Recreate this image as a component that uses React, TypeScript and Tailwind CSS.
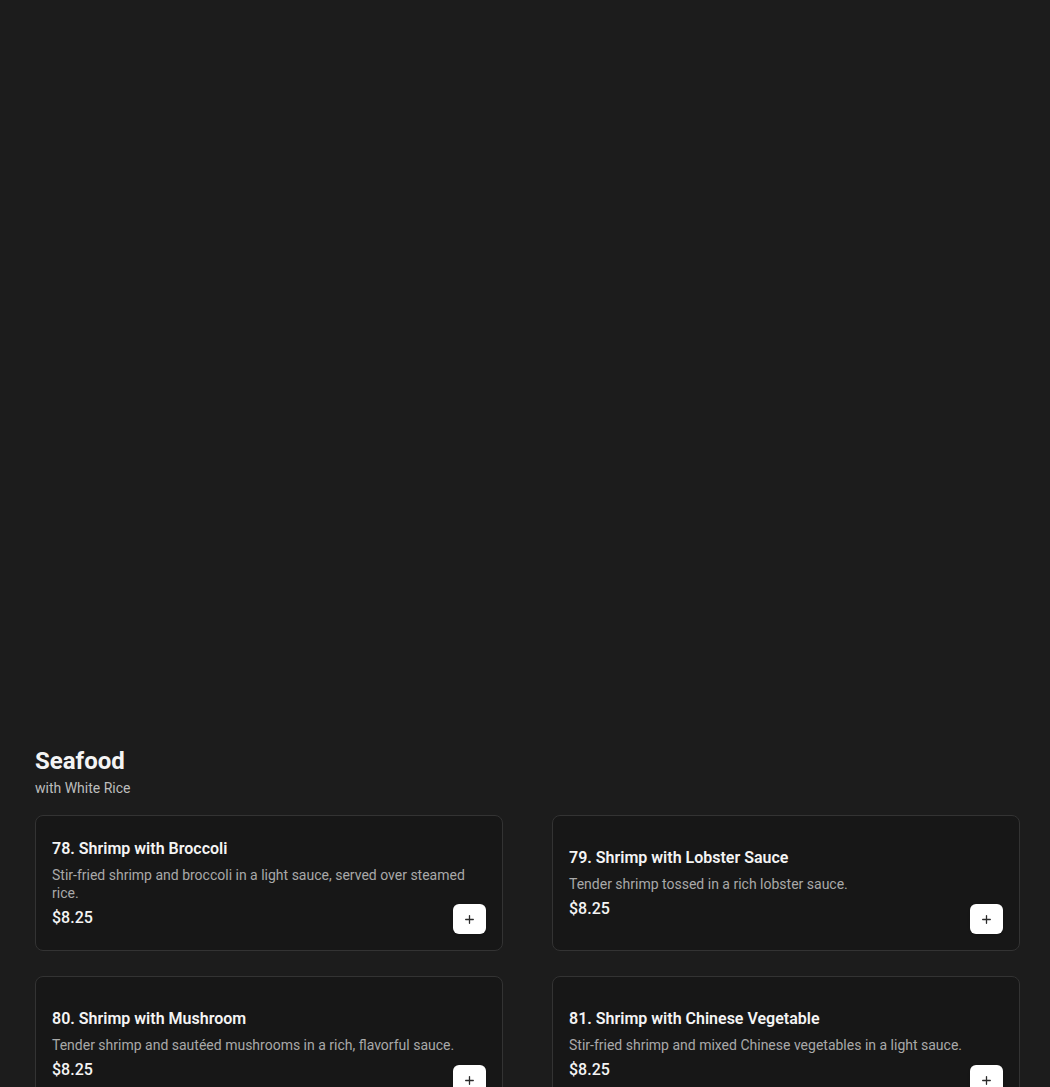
import React from 'react';
import { Plus } from 'lucide-react';

type Item = {
  id: number;
  name: string;
  description: string;
  price: string;
};

const items: Item[] = [
  {
    id: 78,
    name: 'Shrimp with Broccoli',
    description: 'Stir-fried shrimp and broccoli in a light sauce, served over steamed rice.',
    price: '$8.25',
  },
  {
    id: 79,
    name: 'Shrimp with Lobster Sauce',
    description: 'Tender shrimp tossed in a rich lobster sauce.',
    price: '$8.25',
  },
  {
    id: 80,
    name: 'Shrimp with Mushroom',
    description: 'Tender shrimp and sautéed mushrooms in a rich, flavorful sauce.',
    price: '$8.25',
  },
  {
    id: 81,
    name: 'Shrimp with Chinese Vegetable',
    description: 'Stir-fried shrimp and mixed Chinese vegetables in a light sauce.',
    price: '$8.25',
  },
];

const MenuCard: React.FC<{ item: Item }> = ({ item }) => (
  <div className="relative flex h-[136px] flex-col justify-center rounded-lg border border-[#333333] bg-[#171717] p-4">
    <h3 className="text-base font-semibold leading-[26px] text-[#f4f4f4]">
      {item.id}. {item.name}
    </h3>
    <p className="mt-[5px] text-sm leading-[17.5px] text-[#a9a9a9]">{item.description}</p>
    <p className="mt-1 text-base font-medium leading-6 text-[#f4f4f4]">{item.price}</p>
    {/* add button sits over the bottom-right corner */}
    <button className="absolute bottom-4 right-4 flex h-[30px] w-[33px] items-center justify-center rounded-md bg-white text-[#2b2b2b] shadow-sm">
      <Plus size={13} strokeWidth={2.4} />
    </button>
  </div>
);

const App: React.FC = () => {
  return (
    <div
      className="min-h-screen bg-[#1c1c1c]"
      style={{ fontFamily: 'Roboto, "Noto Sans", sans-serif' }}
    >
      <div className="h-[745px]" />
      <section className="pl-[35px] pr-[30px]">
        <h2 className="text-2xl font-bold leading-8 text-[#f4f4f4]">Seafood</h2>
        <p className="mt-[1px] text-sm leading-5 text-[#bdbdbd]">with White Rice</p>
        <div className="mt-[17px] grid grid-cols-2 gap-x-[49px] gap-y-[25px]">
          {items.map((item) => (
            <MenuCard key={item.id} item={item} />
          ))}
        </div>
      </section>
    </div>
  );
};

export default App;
